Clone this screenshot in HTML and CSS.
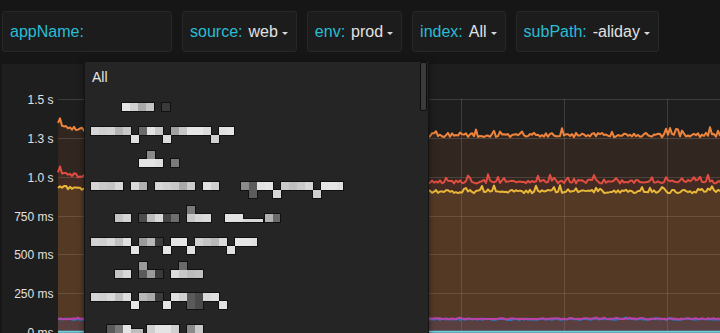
FILE: index.html
```html
<!DOCTYPE html>
<html lang="en">

<head>
    <meta charset="UTF-8">
    <meta name="viewport" content="width=device-width, initial-scale=1.0">
    <title>Response Time</title>
    <link rel="stylesheet" href="styles.css">
</head>

<body>
    <div class="submenu">
        <div class="var-box app-name">
            <span class="var-label">appName:</span>
        </div>
        <div class="var-box">
            <span class="var-label">source:</span>
            <span class="var-value">web</span>
            <span class="caret"></span>
        </div>
        <div class="var-box">
            <span class="var-label">env:</span>
            <span class="var-value">prod</span>
            <span class="caret"></span>
        </div>
        <div class="var-box">
            <span class="var-label">index:</span>
            <span class="var-value">All</span>
            <span class="caret"></span>
        </div>
        <div class="var-box">
            <span class="var-label">subPath:</span>
            <span class="var-value">-aliday</span>
            <span class="caret"></span>
        </div>
    </div>

    <div class="panel">
        <svg id="graph" class="graph" width="718" height="269" viewBox="2 64 718 269"></svg>
    </div>

    <div class="dropdown">
        <div class="dropdown-item">All</div>
        <svg id="masked-options" class="masked-options" width="335" height="241" viewBox="85 92 335 241"></svg>
        <div class="scrollbar"></div>
    </div>

    <script>
        document.addEventListener('DOMContentLoaded', () => {
            const svgNS = 'http://www.w3.org/2000/svg';
            const graph = document.getElementById('graph');
            const masked = document.getElementById('masked-options');

            const addEl = (parent, tag, attrs) => {
                const el = document.createElementNS(svgNS, tag);
                Object.keys(attrs).forEach(key => el.setAttribute(key, attrs[key]));
                parent.appendChild(el);
                return el;
            };

            // small seeded random so the noise is the same every time
            let seed = 11;
            const random = () => {
                seed = (seed * 16807) % 2147483647;
                return (seed - 1) / 2147483646;
            };

            const yScale = (ms) => 332 - ms * 0.15533;

            // grid
            const ticks = [
                { ms: 1500, label: '1.5 s' },
                { ms: 1250, label: '1.3 s' },
                { ms: 1000, label: '1.0 s' },
                { ms: 750, label: '750 ms' },
                { ms: 500, label: '500 ms' },
                { ms: 250, label: '250 ms' },
                { ms: 0, label: '0 ms' }
            ];

            ticks.forEach(tick => {
                const y = Math.round(yScale(tick.ms)) + 0.5;
                addEl(graph, 'line', { x1: 58, x2: 720, y1: y, y2: y, class: 'grid-line' });
                const text = addEl(graph, 'text', { x: 53.5, y: y, class: 'axis-label' });
                text.textContent = tick.label;
            });

            [152, 255, 358, 461, 564, 667].forEach(x => {
                addEl(graph, 'line', { x1: x + 0.5, x2: x + 0.5, y1: 99, y2: 332, class: 'grid-line' });
            });

            // series
            const series = [
                { color: '#ef843c', base: 135, lift: 10, noise: 2.2, spike: 7, rate: 0.14 },
                { color: '#e24d42', base: 181.5, lift: 10, noise: 2, spike: 6, rate: 0.12 },
                { color: '#eab839', base: 191.5, lift: 5, noise: 1.7, spike: 5, rate: 0.12 },
                { color: '#1f78c1', base: 319.3, lift: 0, noise: 0.7, spike: 1.2, rate: 0.06 },
                { color: '#ba43a9', base: 318.8, lift: 0, noise: 0.6, spike: 1.2, rate: 0.06 },
                { color: '#6ed0e0', base: 331.8, lift: 0, noise: 0, spike: 0, rate: 0 }
            ];

            const paths = series.map(s => {
                const points = [];
                for (let x = 58; x <= 722; x += 2) {
                    let y = s.base - s.lift * Math.exp(-(x - 58) / 35);
                    y += (random() - 0.5) * 2 * s.noise;
                    if (random() < s.rate) {
                        y -= s.spike * (0.4 + random() * 0.6);
                    }
                    points.push([x.toFixed(1), y.toFixed(1)]);
                }
                return points;
            });

            const toPath = (points) => points.map((p, j) => (j ? 'L' : 'M') + p[0] + ' ' + p[1]).join(' ');

            series.forEach((s, i) => {
                addEl(graph, 'path', {
                    d: toPath(paths[i]) + ' L722 332 L58 332 Z',
                    fill: s.color,
                    'fill-opacity': 0.1
                });
            });

            series.forEach((s, i) => {
                addEl(graph, 'path', {
                    d: toPath(paths[i]),
                    stroke: s.color,
                    class: 'series-line'
                });
            });

            // blurred option names (mosaic)
            const blocks = [
                [122, 103, 8, 8, '#e4e4e4'], [130, 103, 8, 8, '#d0d0d0'], [138, 103, 8, 8, '#a9a9a9'], [146, 103, 8, 8, '#c4c4c4'], [162, 103, 8, 8, '#3a3a3a'],

                [91, 127, 8, 8, '#d6d6d6'], [99, 127, 8, 8, '#cfcfcf'], [107, 127, 8, 8, '#d2d2d2'], [115, 127, 8, 8, '#b4b4b4'], [123, 127, 8, 8, '#c9c9c9'],
                [131, 135, 8, 8, '#e0e0e0'], [139, 127, 8, 8, '#6a6a6a'], [147, 127, 8, 8, '#e2e2e2'], [155, 127, 8, 8, '#c8c8c8'],
                [163, 135, 8, 8, '#dcdcdc'], [171, 127, 8, 8, '#a0a0a0'], [179, 127, 8, 8, '#c6c6c6'], [187, 127, 8, 8, '#e6e6e6'], [195, 127, 8, 8, '#e6e6e6'], [203, 127, 8, 8, '#dcdcdc'],
                [211, 135, 8, 8, '#d0d0d0'], [219, 127, 8, 8, '#e0e0e0'], [227, 127, 7, 8, '#e4e4e4'],

                [147, 151, 8, 8, '#8a8a8a'], [139, 159, 8, 8, '#e4e4e4'], [147, 159, 8, 8, '#e4e4e4'], [155, 159, 8, 8, '#dedede'], [171, 159, 8, 8, '#7a7a7a'],

                [91, 182, 8, 8, '#d4d4d4'], [99, 182, 8, 8, '#c8c8c8'], [107, 182, 8, 8, '#c4c4c4'], [115, 182, 8, 8, '#d8d8d8'],
                [131, 182, 8, 8, '#d8d8d8'], [139, 182, 8, 8, '#b0b0b0'],
                [155, 182, 8, 8, '#d6d6d6'], [163, 182, 8, 8, '#cfcfcf'], [171, 182, 8, 8, '#c8c8c8'], [179, 182, 8, 8, '#a8a8a8'], [187, 182, 8, 8, '#cacaca'],
                [203, 182, 8, 8, '#e2e2e2'], [211, 182, 8, 8, '#cfcfcf'],
                [241, 182, 8, 8, '#8a8a8a'], [249, 182, 8, 16, '#5c5c5c'], [257, 182, 8, 8, '#e2e2e2'], [265, 182, 8, 8, '#e6e6e6'],
                [273, 190, 8, 8, '#d8d8d8'], [281, 182, 8, 8, '#c8c8c8'], [289, 182, 8, 8, '#bdbdbd'], [297, 182, 8, 8, '#c8c8c8'], [305, 182, 8, 8, '#d6d6d6'],
                [313, 190, 8, 8, '#d0d0d0'], [321, 182, 8, 8, '#e4e4e4'], [329, 182, 8, 8, '#e6e6e6'], [337, 182, 6, 8, '#e0e0e0'],

                [187, 206, 8, 8, '#7a7a7a'],
                [115, 214, 8, 8, '#c4c4c4'], [123, 214, 8, 8, '#d4d4d4'],
                [139, 214, 8, 8, '#4c4c4c'], [147, 214, 8, 8, '#bcbcbc'], [155, 214, 8, 8, '#d8d8d8'], [163, 214, 8, 8, '#444444'], [171, 214, 8, 8, '#6e6e6e'],
                [187, 214, 8, 8, '#c8c8c8'], [195, 214, 8, 8, '#d6d6d6'], [203, 214, 8, 8, '#dadada'],
                [225, 214, 18, 8, '#e2e2e2'], [243, 219, 20, 3, '#d8d8d8'], [265, 214, 8, 8, '#b0b0b0'], [273, 214, 7, 8, '#6a6a6a'],

                [91, 238, 8, 8, '#d2d2d2'], [99, 238, 8, 8, '#cfcfcf'], [107, 238, 8, 8, '#d8d8d8'], [115, 238, 8, 8, '#c0c0c0'], [123, 238, 8, 8, '#e0e0e0'],
                [131, 246, 8, 8, '#e4e4e4'], [139, 238, 8, 8, '#9a9a9a'], [147, 238, 8, 8, '#b8b8b8'], [155, 238, 8, 8, '#3c3c3c'],
                [163, 246, 8, 8, '#e6e6e6'], [171, 238, 8, 8, '#e4e4e4'], [179, 238, 8, 8, '#e6e6e6'],
                [187, 246, 8, 8, '#e0e0e0'], [195, 238, 8, 8, '#d0d0d0'], [203, 238, 8, 8, '#c4c4c4'], [211, 238, 8, 8, '#b8b8b8'], [219, 238, 8, 8, '#dadada'],
                [227, 246, 8, 8, '#e0e0e0'], [235, 238, 8, 8, '#e6e6e6'], [243, 238, 8, 8, '#e6e6e6'], [251, 238, 6, 8, '#e0e0e0'],

                [139, 262, 8, 8, '#9a9a9a'], [179, 262, 8, 8, '#6a6a6a'],
                [115, 270, 8, 8, '#c4c4c4'], [123, 270, 8, 8, '#d8d8d8'],
                [139, 270, 8, 8, '#5a5a5a'], [147, 270, 8, 8, '#9a9a9a'], [155, 270, 8, 8, '#3a3a3a'],
                [171, 270, 8, 8, '#dcdcdc'], [179, 270, 8, 8, '#c8c8c8'], [187, 270, 8, 8, '#bcbcbc'], [195, 270, 8, 8, '#c0c0c0'],

                [91, 293, 8, 8, '#d4d4d4'], [99, 293, 8, 8, '#cfcfcf'], [107, 293, 8, 8, '#d8d8d8'], [115, 293, 8, 8, '#c0c0c0'], [123, 293, 8, 8, '#dedede'],
                [131, 301, 8, 8, '#e4e4e4'], [139, 293, 8, 8, '#b8b8b8'], [147, 293, 8, 8, '#aaaaaa'], [155, 293, 8, 8, '#3c3c3c'],
                [163, 301, 8, 8, '#e4e4e4'], [171, 293, 8, 8, '#e0e0e0'], [179, 293, 8, 8, '#d0d0d0'], [187, 293, 8, 16, '#5a5a5a'], [195, 293, 8, 16, '#4a4a4a'],
                [203, 293, 8, 8, '#d8d8d8'], [211, 293, 8, 8, '#e0e0e0'], [219, 301, 8, 8, '#e0e0e0'],

                [107, 325, 8, 8, '#5a5a5a'], [115, 325, 8, 8, '#7a7a7a'], [123, 325, 8, 8, '#e4e4e4'], [131, 329, 12, 4, '#bdbdbd'],
                [147, 325, 8, 8, '#cfcfcf'], [155, 325, 8, 8, '#e4e4e4'], [163, 325, 8, 8, '#e4e4e4'], [171, 325, 8, 8, '#d0d0d0'],
                [187, 325, 8, 8, '#8a8a8a'], [195, 325, 8, 8, '#c8c8c8']
            ];

            blocks.forEach(b => {
                addEl(masked, 'rect', { x: b[0] - 1, y: b[1] - 1, width: b[2] + 2, height: b[3] + 2, fill: '#111111' });
            });
            blocks.forEach(b => {
                addEl(masked, 'rect', { x: b[0], y: b[1], width: b[2], height: b[3], fill: b[4] });
            });
        });
    </script>
</body>

</html>
```

FILE: styles.css
```css
/* Page */
html,
body {
    margin: 0;
    height: 100%;
    overflow: hidden;
}

body {
    position: relative;
    background-color: #161616;
    font-family: "Liberation Sans", Arial, sans-serif;
    color: #d8d9da;
}

/* Template variables bar */
.submenu {
    display: flex;
    gap: 10px;
    height: 64px;
    padding: 11px 0 0 2px;
    box-sizing: border-box;
}

.var-box {
    display: flex;
    align-items: center;
    height: 41px;
    padding: 0 8px 0 7px;
    box-sizing: border-box;
    background-color: #1c1c1c;
    border: 1px solid #272727;
    border-radius: 3px;
    font-size: 16px;
}

.app-name {
    width: 170px;
}

.var-label {
    color: #29bdd4;
}

.var-value {
    margin-left: 6px;
    color: #e2e2e2;
}

.caret {
    margin: 3px 0 0 4px;
    border-left: 3px solid transparent;
    border-right: 3px solid transparent;
    border-top: 3px solid #d8d9da;
}

/* Graph panel */
.panel {
    margin-left: 2px;
    height: 269px;
    background-color: #1e1e1e;
}

.graph {
    display: block;
}

.grid-line {
    stroke: rgba(255, 255, 255, 0.14);
    stroke-width: 1;
}

.axis-label {
    fill: #e0e0e0;
    font-family: "Liberation Sans", Arial, sans-serif;
    font-size: 12px;
    text-anchor: end;
    dominant-baseline: central;
}

.series-line {
    fill: none;
    stroke-width: 2;
    stroke-linejoin: round;
}

/* Variable dropdown */
.dropdown {
    position: absolute;
    left: 84px;
    top: 61px;
    width: 345px;
    height: 290px;
    box-sizing: border-box;
    background-color: #252525;
    border: 1px solid #141414;
    box-shadow: 0 2px 6px rgba(0, 0, 0, 0.5);
}

.dropdown-item {
    padding: 6px 7px;
    line-height: 18px;
    font-size: 14px;
    color: #e4e4e4;
}

.masked-options {
    display: block;
}

.scrollbar {
    position: absolute;
    top: 0;
    right: 1px;
    width: 7px;
    height: 49px;
    box-sizing: border-box;
    background-color: #3b3b3b;
    border: 1px solid #0c0c0c;
    border-radius: 2px;
}
```
